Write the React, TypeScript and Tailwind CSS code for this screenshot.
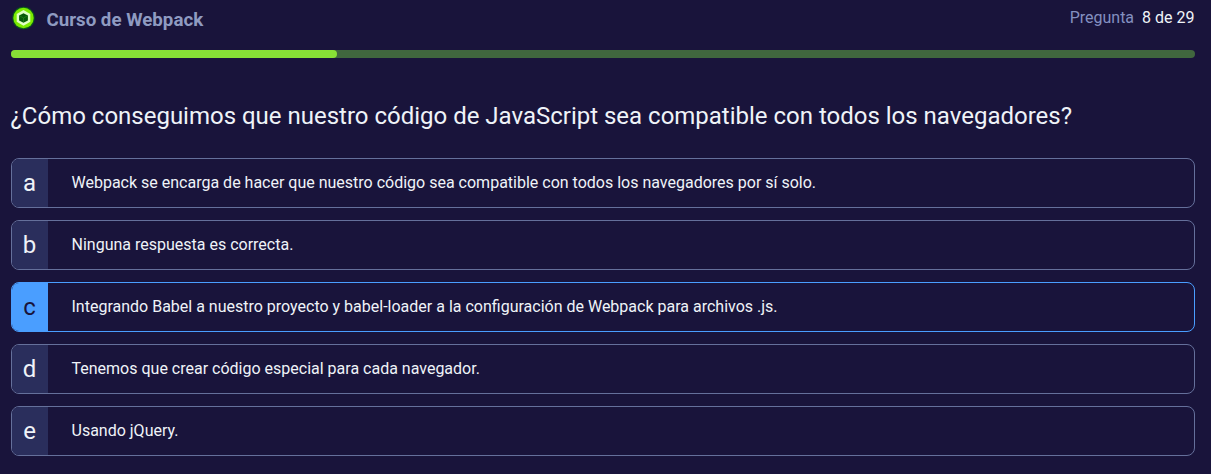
import React from "react";

const options = [
  { key: "a", text: "Webpack se encarga de hacer que nuestro código sea compatible con todos los navegadores por sí solo." },
  { key: "b", text: "Ninguna respuesta es correcta." },
  { key: "c", text: "Integrando Babel a nuestro proyecto y babel-loader a la configuración de Webpack para archivos .js." },
  { key: "d", text: "Tenemos que crear código especial para cada navegador." },
  { key: "e", text: "Usando jQuery." },
];

function CourseBadge() {
  return (
    <svg viewBox="0 0 24 24" className="size-6 shrink-0" aria-hidden="true">
      <circle cx="12.5" cy="12" r="11.2" fill="#0a5a1c" />
      <circle cx="12.5" cy="12" r="10.2" fill="#7bea00" />
      <path d="M12.5 4 19.3 7.9V15.8L12.5 19.8 5.7 15.8V7.9Z" fill="#e0ffc4" />
      <path d="M12.5 7.2 16.9 9.5V14.4L12.5 16.8 8.1 14.4V9.5Z" fill="#075a0a" />
      <path d="M8.7 9.9 12.5 12 16.3 9.9M12.5 12V16.2" fill="none" stroke="#2a8f1c" strokeWidth="0.6" />
    </svg>
  );
}

function Option({ letter, text, selected }: { letter: string; text: string; selected: boolean }) {
  return (
    <li
      className={`flex h-[50px] overflow-hidden rounded-lg border ${
        selected ? "border-[#4a9eff]" : "border-[#65709b]"
      }`}
    >
      <span
        className={`flex w-9 shrink-0 items-center justify-center text-2xl ${
          selected ? "bg-[#4a9eff] text-[#19143b]" : "bg-[#2a2e5c] text-[#eff3f8]"
        }`}
      >
        {letter}
      </span>
      <p className="pt-3 pl-6 text-base leading-6 text-[#eff3f8]">{text}</p>
    </li>
  );
}

export default function App() {
  return (
    <main className="h-[474px] bg-[#19143b] pr-[16.5px] pl-[10.5px] font-['Roboto',sans-serif] text-[#eff3f8]">
      <header className="flex h-[50px] justify-between">
        <div className="flex pt-1.5">
          <CourseBadge />
          <h1 className="ml-3 text-[18.72px] leading-[29px] font-bold text-[#8f9bc1]">Curso de Webpack</h1>
        </div>
        <p className="pt-1.5 text-base leading-6">
          <span className="mr-2 text-[#8490c0]">Pregunta</span>
          <span>8 de 29</span>
        </p>
      </header>
      <div className="h-2 overflow-hidden rounded bg-[#40673e]">
        <div className="h-full w-[326px] rounded-r bg-[#87e036]" />
      </div>
      <h2 className="mt-10 h-[60px] text-2xl leading-9 tracking-[-0.006px]">
        ¿Cómo conseguimos que nuestro código de JavaScript sea compatible con todos los navegadores?
      </h2>
      <ul className="flex flex-col gap-3">
        {options.map((o) => (
          <Option key={o.key} letter={o.key} text={o.text} selected={o.key === "c"} />
        ))}
      </ul>
    </main>
  );
}
